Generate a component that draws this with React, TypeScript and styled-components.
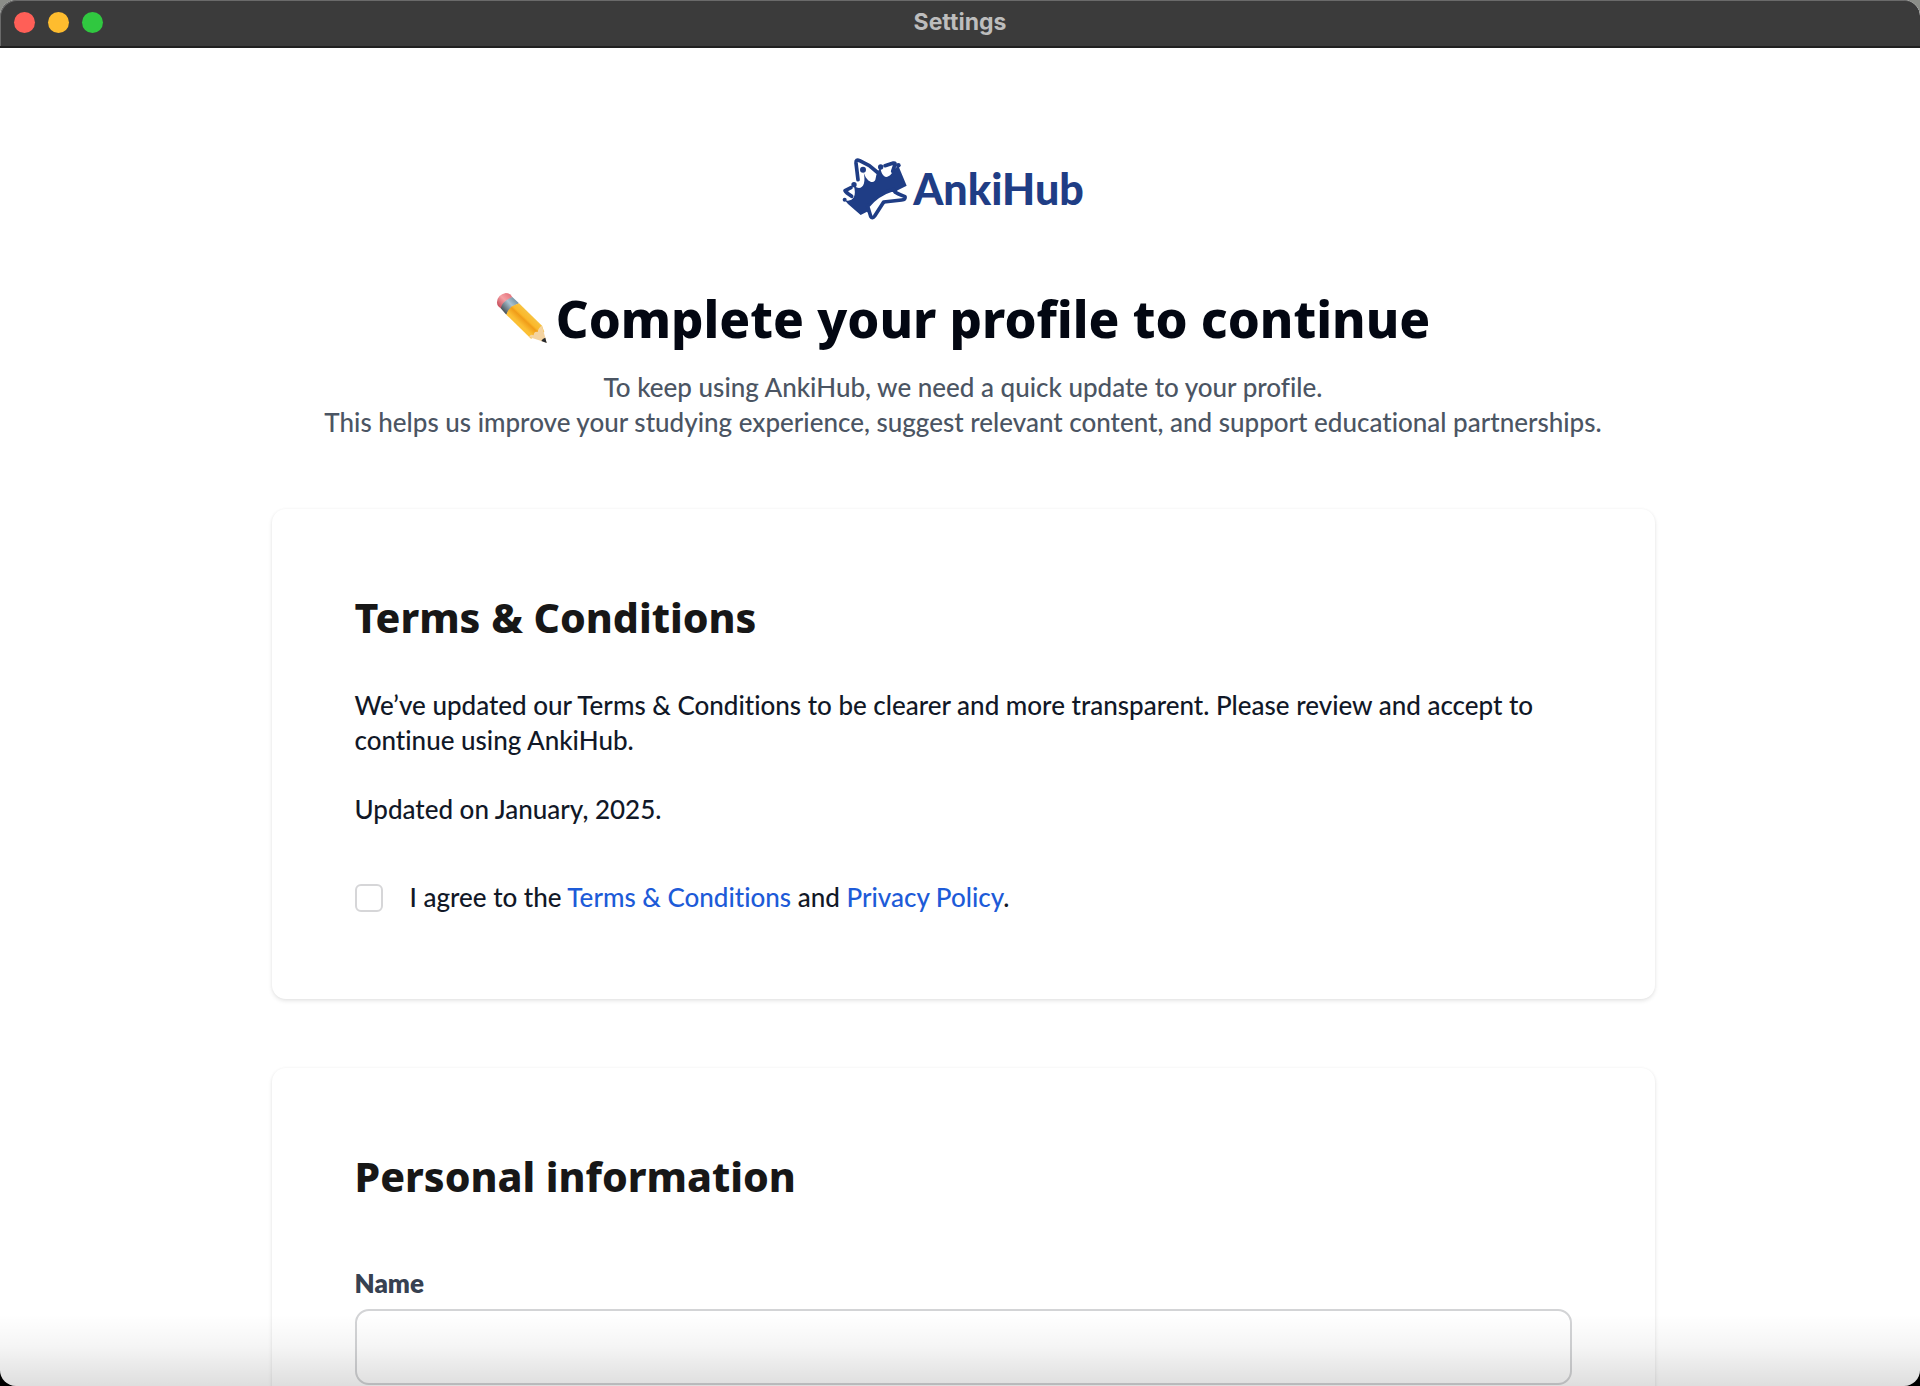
import React, { useState } from "react";
import styled, { createGlobalStyle } from "styled-components";

const GlobalStyle = createGlobalStyle`
  *, *::before, *::after { box-sizing: border-box; }
  body {
    margin: 0;
    background: #000;
    font-family: Lato, "Noto Sans", sans-serif;
    font-variant-ligatures: none;
  }
`;

const Desktop = styled.div`
  background: linear-gradient(#8b8d88 0 48px, #000 48px);
`;

const Window = styled.div`
  position: relative;
  display: flex;
  flex-direction: column;
  height: 100vh;
  overflow: hidden;
  background: #fff;
  border-radius: 16px;
`;

const TitleBar = styled.header`
  display: grid;
  grid-template-columns: 1fr auto 1fr;
  align-items: center;
  flex: none;
  height: 48px;
  padding: 0 14px 2px;
  background: #3b3b3b;
  border-bottom: 2px solid #202020;
  border-radius: 16px 16px 0 0;
  box-shadow: inset 1px 1px 0 #6a6a6a;
`;

const WindowControls = styled.div`
  display: flex;
  gap: 13px;
`;

const WindowControl = styled.button<{ $color: string }>`
  width: 21px;
  height: 21px;
  padding: 0;
  border: 0;
  border-radius: 50%;
  background: ${({ $color }) => $color};
`;

const WindowTitle = styled.div`
  color: #bdbdbd;
  font: 700 23px/28px Inter, sans-serif;
`;

const Page = styled.main`
  flex: 1;
  min-height: 0;
  padding: 109px 24px 0 30px;
  overflow-y: auto;
  scrollbar-width: none;
`;

const Column = styled.div`
  display: flex;
  flex-direction: column;
  gap: 69px;
  max-width: 1383px;
  margin: 0 auto;
`;

const Intro = styled.div`
  display: flex;
  flex-direction: column;
  align-items: center;
  text-align: center;
`;

const Brand = styled.div`
  display: flex;
  align-items: center;
  gap: 5px;
  color: #1f3d85;
  font-size: 43px;
  font-weight: 900;
  line-height: 64px;
`;

const PageTitle = styled.h1`
  display: flex;
  align-items: center;
  gap: 8px;
  margin: 67px 0 22px;
  color: #030712;
  font: 800 51px/60px "Noto Sans", sans-serif;
`;

const Lead = styled.p`
  margin: 0;
  color: #4b5563;
  font-size: 26px;
  font-weight: 500;
  line-height: 35px;
`;

const Card = styled.section`
  padding: 84px 83px;
  background: #fff;
  border-radius: 14px;
  box-shadow: 0 2px 4px rgba(0, 0, 0, 0.1), 0 0 3px rgba(0, 0, 0, 0.04);
`;

const CardTitle = styled.h2<{ $gap: number }>`
  margin: 0 0 ${({ $gap }) => $gap}px;
  color: #171717;
  font: 800 41px/48px "Noto Sans", sans-serif;
`;

const Copy = styled.p`
  margin: 0 0 34px;
  color: #111827;
  font-size: 26px;
  font-weight: 500;
  line-height: 35px;
`;

const Agreement = styled.div`
  display: flex;
  align-items: center;
  gap: 27px;
  margin-top: 53px;
  color: #111827;
  font-size: 26px;
  font-weight: 500;
  line-height: 35px;
`;

const Checkbox = styled.input`
  appearance: none;
  flex: none;
  width: 28px;
  height: 28px;
  margin: 0;
  border: 2px solid #d6d6d8;
  border-radius: 6px;
  background: #fff;

  &:checked {
    border-color: #1d4ed8;
    background: #1d4ed8;
  }
`;

const TextLink = styled.a`
  color: #1d5bd8;
  text-decoration: none;
`;

const Field = styled.div`
  display: flex;
  flex-direction: column;
  gap: 8px;
`;

const FieldLabel = styled.label`
  color: #374151;
  font-size: 26px;
  font-weight: 800;
  line-height: 35px;
`;

const TextInput = styled.input`
  width: 100%;
  height: 76px;
  padding: 0 24px;
  border: 2px solid #d3d4d6;
  border-radius: 14px;
  background: #fff;
  color: #111827;
  font: 500 26px/35px Lato, sans-serif;
`;

const BottomFade = styled.div`
  position: absolute;
  inset: auto 0 0;
  height: 72px;
  background: linear-gradient(rgba(0, 0, 0, 0), rgba(0, 0, 0, 0.04) 45%, rgba(0, 0, 0, 0.13));
  pointer-events: none;
`;

function CrownStar() {
  return (
    <svg width="66" height="64" viewBox="9 12 198 192" fill="none" aria-hidden="true">
      <path
        d="M17 141C36 148 56 136 44 97C64 117 86 99 72 51C80 89 108 97 110 76C112 60 119 50 125 43C124 60 136 78 148 70C161 63 164 47 178 38L203 98L176 112L100 190L84 176L65 186L27 153Z"
        fill="currentColor"
      />
      <path
        d="M86 160Q115 124 164 109L168 117Q173 121 198 131Q201 140 188 141L134 147L107 189Q100 199 95 190Z"
        fill="#fff"
        stroke="currentColor"
        strokeWidth="11"
        strokeLinejoin="round"
      />
      <path
        d="M57 80L51 30Q50 18 62 23L91 38L114 57M138 38L163 30Q171 29 167 37L161 55M18 113L36 104M24 112Q15 112 23 119L38 130"
        stroke="currentColor"
        strokeWidth="11"
        strokeLinecap="round"
        strokeLinejoin="round"
      />
      <g fill="currentColor">
        <circle cx="72" cy="50" r="9" />
        <circle cx="125" cy="42" r="8" />
        <circle cx="178" cy="37" r="7" />
        <circle cx="45" cy="95" r="8" />
        <circle cx="17" cy="140" r="6" />
      </g>
    </svg>
  );
}

function Pencil() {
  return (
    <svg width="52" height="52" viewBox="45 37 156 156" role="img" aria-label="Pencil">
      <defs>
        <linearGradient id="wood" gradientUnits="userSpaceOnUse" x1="142" y1="96" x2="112" y2="128">
          <stop offset="0" stopColor="#f6c343" />
          <stop offset="0.45" stopColor="#fbb82a" />
          <stop offset="0.6" stopColor="#f09c18" />
          <stop offset="1" stopColor="#fbbf34" />
        </linearGradient>
        <linearGradient id="metal" gradientUnits="userSpaceOnUse" x1="106" y1="62" x2="68" y2="96">
          <stop offset="0" stopColor="#7793a4" />
          <stop offset="0.4" stopColor="#a9c3d1" />
          <stop offset="1" stopColor="#4a5258" />
        </linearGradient>
        <linearGradient id="rubber" gradientUnits="userSpaceOnUse" x1="90" y1="44" x2="54" y2="80">
          <stop offset="0" stopColor="#e4727c" />
          <stop offset="0.5" stopColor="#f5a0a4" />
          <stop offset="1" stopColor="#c9525f" />
        </linearGradient>
      </defs>
      <path d="M48 67Q50 45 74 40Q87 40 94 52L59 86Q47 79 48 67Z" fill="url(#rubber)" />
      <path d="M59 86Q64 65 94 52L114 71Q88 82 76 105Z" fill="url(#metal)" />
      <path d="M76 105Q82 81 114 71L183 138L190 157L150 177Z" fill="url(#wood)" />
      <path d="M183 138L197 189L144 172Q149 162 158 167Q159 153 170 157Q172 143 183 138Z" fill="#f4d3a0" />
      <path d="M193 174L197 190L181 184Q184 176 193 174Z" fill="#26282c" />
    </svg>
  );
}

export default function App() {
  const [agreed, setAgreed] = useState(false);
  const [name, setName] = useState("");

  return (
    <Desktop>
      <GlobalStyle />
      <Window>
        <TitleBar>
          <WindowControls>
            <WindowControl $color="#ff5f57" aria-label="Close" />
            <WindowControl $color="#febc2e" aria-label="Minimize" />
            <WindowControl $color="#30c840" aria-label="Zoom" />
          </WindowControls>
          <WindowTitle>Settings</WindowTitle>
        </TitleBar>
        <Page>
          <Column>
            <Intro>
              <Brand>
                <CrownStar />
                AnkiHub
              </Brand>
              <PageTitle>
                <Pencil />
                Complete your profile to continue
              </PageTitle>
              <Lead>
                To keep using AnkiHub, we need a quick update to your profile.
                <br />
                This helps us improve your studying experience, suggest relevant content, and support educational
                partnerships.
              </Lead>
            </Intro>

            <Card>
              <CardTitle $gap={47}>Terms &amp; Conditions</CardTitle>
              <Copy>
                We’ve updated our Terms &amp; Conditions to be clearer and more transparent. Please review and accept to
                continue using AnkiHub.
              </Copy>
              <Copy>Updated on January, 2025.</Copy>
              <Agreement>
                <Checkbox
                  id="agree"
                  type="checkbox"
                  checked={agreed}
                  onChange={(event) => setAgreed(event.target.checked)}
                />
                <label htmlFor="agree">
                  I agree to the <TextLink href="#terms">Terms &amp; Conditions</TextLink> and{" "}
                  <TextLink href="#privacy">Privacy Policy</TextLink>.
                </label>
              </Agreement>
            </Card>

            <Card>
              <CardTitle $gap={66}>Personal information</CardTitle>
              <Field>
                <FieldLabel htmlFor="name">Name</FieldLabel>
                <TextInput id="name" type="text" value={name} onChange={(event) => setName(event.target.value)} />
              </Field>
            </Card>
          </Column>
        </Page>
        <BottomFade />
      </Window>
    </Desktop>
  );
}
